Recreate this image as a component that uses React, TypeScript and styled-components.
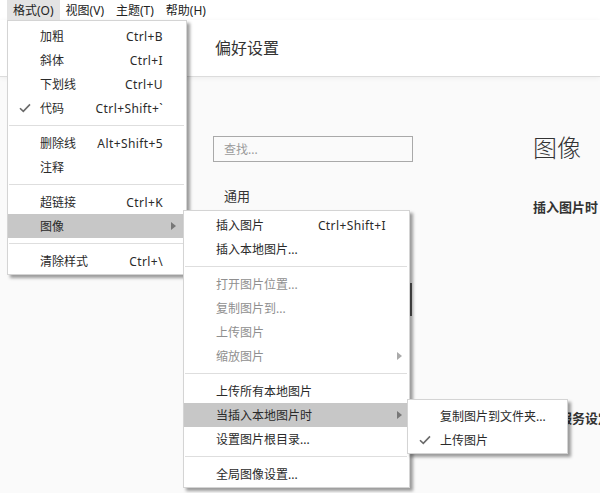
import React from 'react';
import styled, { createGlobalStyle } from 'styled-components';

const GlobalStyle = createGlobalStyle`
    html, body {
        margin: 0;
        padding: 0;
        width: 600px;
        height: 493px;
        overflow: hidden;
        background-color: #fafafa;
        font-family: "Noto Sans", "Noto Sans CJK SC", sans-serif;
        color: #333;
    }
`;

type Entry =
    | { kind: 'sep' }
    | {
          kind: 'item';
          label: string;
          shortcut?: string;
          checked?: boolean;
          disabled?: boolean;
          active?: boolean;
          sub?: boolean;
      };

const formatMenu: Entry[] = [
    { kind: 'item', label: '加粗', shortcut: 'Ctrl+B' },
    { kind: 'item', label: '斜体', shortcut: 'Ctrl+I' },
    { kind: 'item', label: '下划线', shortcut: 'Ctrl+U' },
    { kind: 'item', label: '代码', shortcut: 'Ctrl+Shift+`', checked: true },
    { kind: 'sep' },
    { kind: 'item', label: '删除线', shortcut: 'Alt+Shift+5' },
    { kind: 'item', label: '注释' },
    { kind: 'sep' },
    { kind: 'item', label: '超链接', shortcut: 'Ctrl+K' },
    { kind: 'item', label: '图像', active: true, sub: true },
    { kind: 'sep' },
    { kind: 'item', label: '清除样式', shortcut: 'Ctrl+\\' },
];

const imageMenu: Entry[] = [
    { kind: 'item', label: '插入图片', shortcut: 'Ctrl+Shift+I' },
    { kind: 'item', label: '插入本地图片...' },
    { kind: 'sep' },
    { kind: 'item', label: '打开图片位置...', disabled: true },
    { kind: 'item', label: '复制图片到...', disabled: true },
    { kind: 'item', label: '上传图片', disabled: true },
    { kind: 'item', label: '缩放图片', disabled: true, sub: true },
    { kind: 'sep' },
    { kind: 'item', label: '上传所有本地图片' },
    { kind: 'item', label: '当插入本地图片时', active: true, sub: true },
    { kind: 'item', label: '设置图片根目录...' },
    { kind: 'sep' },
    { kind: 'item', label: '全局图像设置...' },
];

const insertMenu: Entry[] = [
    { kind: 'item', label: '复制图片到文件夹...' },
    { kind: 'item', label: '上传图片', checked: true },
];

const Check = () => (
    <svg width="12" height="10" viewBox="0 0 12 10">
        <path d="M1 5.2 L4.3 8.4 L11 1.4" fill="none" stroke="#6a6a6a" strokeWidth="1.6" />
    </svg>
);

const MenuList: React.FC<{ entries: Entry[]; arrowRight: number }> = ({ entries, arrowRight }) => (
    <>
        {entries.map((e, i) =>
            e.kind === 'sep' ? (
                <Separator key={i} />
            ) : (
                <Item key={i} $active={e.active} $disabled={e.disabled}>
                    <Gutter>{e.checked && <Check />}</Gutter>
                    <Label>{e.label}</Label>
                    {e.shortcut && <Shortcut>{e.shortcut}</Shortcut>}
                    {e.sub && <Arrow $right={arrowRight} $disabled={e.disabled} />}
                </Item>
            )
        )}
    </>
);

const App: React.FC = () => {
    return (
        <>
            <GlobalStyle />
            <Window>
                <MenuBar>
                    <MenuTitle $open>格式(O)</MenuTitle>
                    <MenuTitle>视图(V)</MenuTitle>
                    <MenuTitle>主题(T)</MenuTitle>
                    <MenuTitle>帮助(H)</MenuTitle>
                </MenuBar>
                <Header>
                    <HeaderTitle>偏好设置</HeaderTitle>
                </Header>
                <Body>
                    <Sidebar>
                        <Search placeholder="查找..." />
                        <NavItem>通用</NavItem>
                        <ScrollThumb />
                    </Sidebar>
                    <Main>
                        <SectionTitle>图像</SectionTitle>
                        <GroupLabel>插入图片时</GroupLabel>
                        <GroupLabel $gap={191}>上传服务设定</GroupLabel>
                    </Main>
                </Body>

                <Menu $left={7} $top={20} $width={180}>
                    <MenuList entries={formatMenu} arrowRight={10} />
                </Menu>
                <Menu $left={183} $top={210} $width={227} $padTop={2}>
                    <MenuList entries={imageMenu} arrowRight={7} />
                </Menu>
                <Menu $left={407} $top={399} $width={161} $padTop={4} $padBottom={1}>
                    <MenuList entries={insertMenu} arrowRight={7} />
                </Menu>
            </Window>
        </>
    );
};

export default App;

const Window = styled.div`
    position: relative;
    width: 600px;
    height: 493px;
    overflow: hidden;
    background-color: #fafafa;
`;

const MenuBar = styled.div`
    display: flex;
    align-items: stretch;
    height: 20px;
    padding-left: 7px;
    background-color: #fff;
`;

const MenuTitle = styled.div<{ $open?: boolean }>`
    display: flex;
    align-items: center;
    padding: 0 6px 0 6px;
    font-size: 12px;
    color: #222;
    background-color: ${({ $open }) => ($open ? '#e3e3e3' : 'transparent')};
`;

const Header = styled.div`
    display: flex;
    align-items: center;
    height: 56px;
    padding-left: 215px;
    background-color: #fff;
    border-bottom: 1px solid #dcdcdc;
    box-shadow: 0 1px 5px rgba(0, 0, 0, 0.06);
`;

const HeaderTitle = styled.div`
    font-size: 16px;
    color: #333;
    padding-bottom: 3px;
`;

const Body = styled.div`
    display: flex;
    flex-direction: row;
`;

const Sidebar = styled.div`
    position: relative;
    width: 202px;
    height: 416px;
    margin-left: 213px;
    padding-top: 59px;
    box-sizing: border-box;
`;

const Search = styled.input`
    display: block;
    width: 200px;
    height: 26px;
    box-sizing: border-box;
    padding: 0 10px;
    border: 1px solid #a9a9a9;
    background-color: #fafafa;
    font-family: "Noto Sans", "Noto Sans CJK SC", sans-serif;
    font-size: 12px;
    outline: none;
    &::placeholder {
        color: #9a9a9a;
    }
`;

const NavItem = styled.div`
    margin-top: 24px;
    padding-left: 11px;
    height: 20px;
    line-height: 20px;
    font-size: 13px;
    color: #333;
`;

const ScrollThumb = styled.div`
    position: absolute;
    right: 1px;
    top: 206px;
    width: 3px;
    height: 33px;
    background-color: #5a5a5a;
`;

const Main = styled.div`
    margin-left: 120px;
    padding-top: 55px;
`;

const SectionTitle = styled.div`
    height: 32px;
    line-height: 32px;
    font-size: 24px;
    font-weight: 300;
    color: #333;
`;

const GroupLabel = styled.div<{ $gap?: number }>`
    margin-top: ${({ $gap }) => $gap ?? 33}px;
    height: 20px;
    line-height: 20px;
    font-size: 13px;
    font-weight: bold;
    color: #333;
    white-space: nowrap;
`;

const Menu = styled.div<{ $left: number; $top: number; $width: number; $padTop?: number; $padBottom?: number }>`
    position: absolute;
    left: ${({ $left }) => $left}px;
    top: ${({ $top }) => $top}px;
    width: ${({ $width }) => $width}px;
    box-sizing: border-box;
    padding: ${({ $padTop }) => $padTop ?? 3}px 0 ${({ $padBottom }) => $padBottom ?? 1}px;
    background-color: #fff;
    border: 1px solid #d4d4d4;
    box-shadow: 3px 3px 3px rgba(0, 0, 0, 0.38);
`;

const Item = styled.div<{ $active?: boolean; $disabled?: boolean }>`
    position: relative;
    display: flex;
    align-items: center;
    height: 24px;
    padding-right: 23px;
    font-size: 12px;
    white-space: nowrap;
    color: ${({ $disabled }) => ($disabled ? '#8f8f8f' : '#2a2a2a')};
    background-color: ${({ $active }) => ($active ? '#c7c7c7' : 'transparent')};
`;

const Gutter = styled.div`
    display: flex;
    align-items: center;
    justify-content: center;
    width: 32px;
    padding-left: 1px;
    box-sizing: border-box;
    flex-shrink: 0;
`;

const Label = styled.div`
    flex: 1;
`;

const Shortcut = styled.div`
    margin-left: 16px;
    letter-spacing: 0.4px;
`;

const Arrow = styled.div<{ $right: number; $disabled?: boolean }>`
    position: absolute;
    right: ${({ $right }) => $right}px;
    top: 50%;
    margin-top: -4px;
    width: 0;
    height: 0;
    border-top: 4px solid transparent;
    border-bottom: 4px solid transparent;
    border-left: 5px solid ${({ $disabled }) => ($disabled ? '#aaa' : '#777')};
`;

const Separator = styled.div`
    height: 1px;
    margin: 5px 2px 5px 1px;
    background-color: #dedede;
`;
